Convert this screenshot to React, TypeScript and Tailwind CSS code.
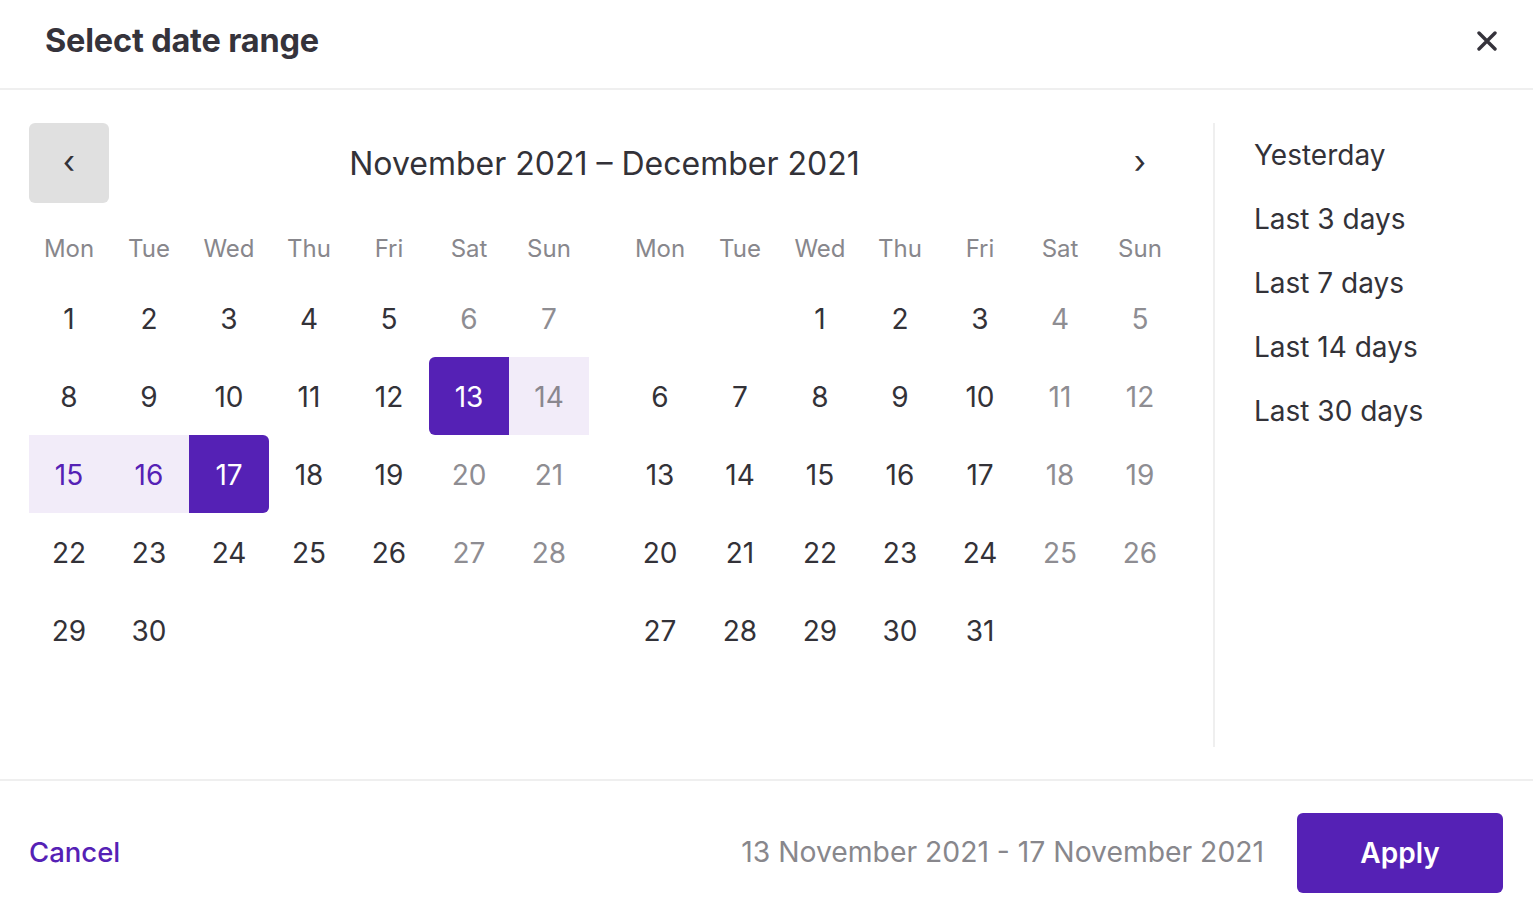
import React from "react";

const PURPLE = "bg-[#5521b5]";

type Cell = { d: number | null; weekend: boolean; state?: "start" | "end" | "range" };

function buildMonth(startOffset: number, days: number, sel: Record<number, "start" | "end" | "range">): Cell[] {
  const cells: Cell[] = [];
  for (let i = 0; i < startOffset; i++) cells.push({ d: null, weekend: false });
  for (let d = 1; d <= days; d++) {
    const col = (startOffset + d - 1) % 7;
    cells.push({ d, weekend: col >= 5, state: sel[d] });
  }
  while (cells.length % 7 !== 0) cells.push({ d: null, weekend: false });
  return cells;
}

const weekdays = ["Mon", "Tue", "Wed", "Thu", "Fri", "Sat", "Sun"];

function Month({ cells }: { cells: Cell[] }) {
  return (
    <div className="w-[560px]">
      <div className="grid grid-cols-7 h-[76px] pt-[16px]">
        {weekdays.map((w) => (
          <div key={w} className="flex items-center justify-center text-[24px] text-[#88878c]">
            {w}
          </div>
        ))}
      </div>
      <div className="grid grid-cols-7">
        {cells.map((c, i) => {
          let cls = "h-[78px] flex items-center justify-center text-[28px] pt-[2px] ";
          if (c.state === "start") cls += `${PURPLE} text-white rounded-l-[6px]`;
          else if (c.state === "end") cls += `${PURPLE} text-white rounded-r-[6px]`;
          else if (c.state === "range") cls += `bg-[#f2ecf9] ${c.weekend ? "text-[#8a878f]" : "text-[#5521b5]"}`;
          else cls += c.weekend ? "text-[#8e8d92]" : "text-[#333238]";
          return (
            <div key={i} className={cls}>
              {c.d ?? ""}
            </div>
          );
        })}
      </div>
    </div>
  );
}

export default function App() {
  const nov = buildMonth(0, 30, { 13: "start", 14: "range", 15: "range", 16: "range", 17: "end" });
  const dec = buildMonth(2, 31, {});
  const presets = ["Yesterday", "Last 3 days", "Last 7 days", "Last 14 days", "Last 30 days"];
  return (
    <div className="w-[1533px] h-[919px] bg-white flex flex-col text-[#333238]" style={{ fontFamily: "Inter, 'Noto Sans', sans-serif" }}>
      <div className="h-[90px] border-b-2 border-[#efefef] flex items-center justify-between pl-[45px] pr-[36px] shrink-0">
        <div className="text-[32.5px] font-bold text-[#35333b] tracking-[-0.2px] pb-[6px]">Select date range</div>
        <svg width="20" height="20" viewBox="0 0 20 20" className="mb-[6px]">
          <path d="M2 2 L18 18 M18 2 L2 18" stroke="#35333b" strokeWidth="3.4" strokeLinecap="round" />
        </svg>
      </div>
      <div className="flex-1 flex pt-[33px] pb-[32px] pl-[29px]">
        <div className="w-[1151px] shrink-0">
          <div className="flex items-center justify-between h-[80px]">
            <button className="w-[80px] h-[80px] rounded-[6px] bg-[#e0e0e0] flex items-center justify-center text-[32px] text-[#333238] pb-[2px]">
              ‹
            </button>
            <div className="text-[32px] text-[#333238] pt-[2px]">November 2021 – December 2021</div>
            <button className="w-[80px] h-[80px] flex items-center justify-center text-[32px] text-[#333238] pb-[2px]">
              ›
            </button>
          </div>
          <div className="flex gap-[31px]">
            <Month cells={nov} />
            <Month cells={dec} />
          </div>
        </div>
        <div className="ml-[33px] border-l-2 border-[#efefef] pl-[39px] flex flex-col">
          {presets.map((p) => (
            <div key={p} className="h-[64px] flex items-center text-[28px] text-[#333238]">
              {p}
            </div>
          ))}
        </div>
      </div>
      <div className="h-[140px] border-t-2 border-[#efefef] flex items-center justify-between pl-[29px] pr-[30px] pt-[5px] shrink-0">
        <div className="text-[27.5px] font-medium text-[#5521b5]">Cancel</div>
        <div className="flex items-center gap-[33px]">
          <div className="text-[28.3px] text-[#88878c]">13 November 2021 - 17 November 2021</div>
          <button className="w-[206px] h-[80px] rounded-[6px] bg-[#5521b5] text-white text-[28px] font-semibold">Apply</button>
        </div>
      </div>
    </div>
  );
}
